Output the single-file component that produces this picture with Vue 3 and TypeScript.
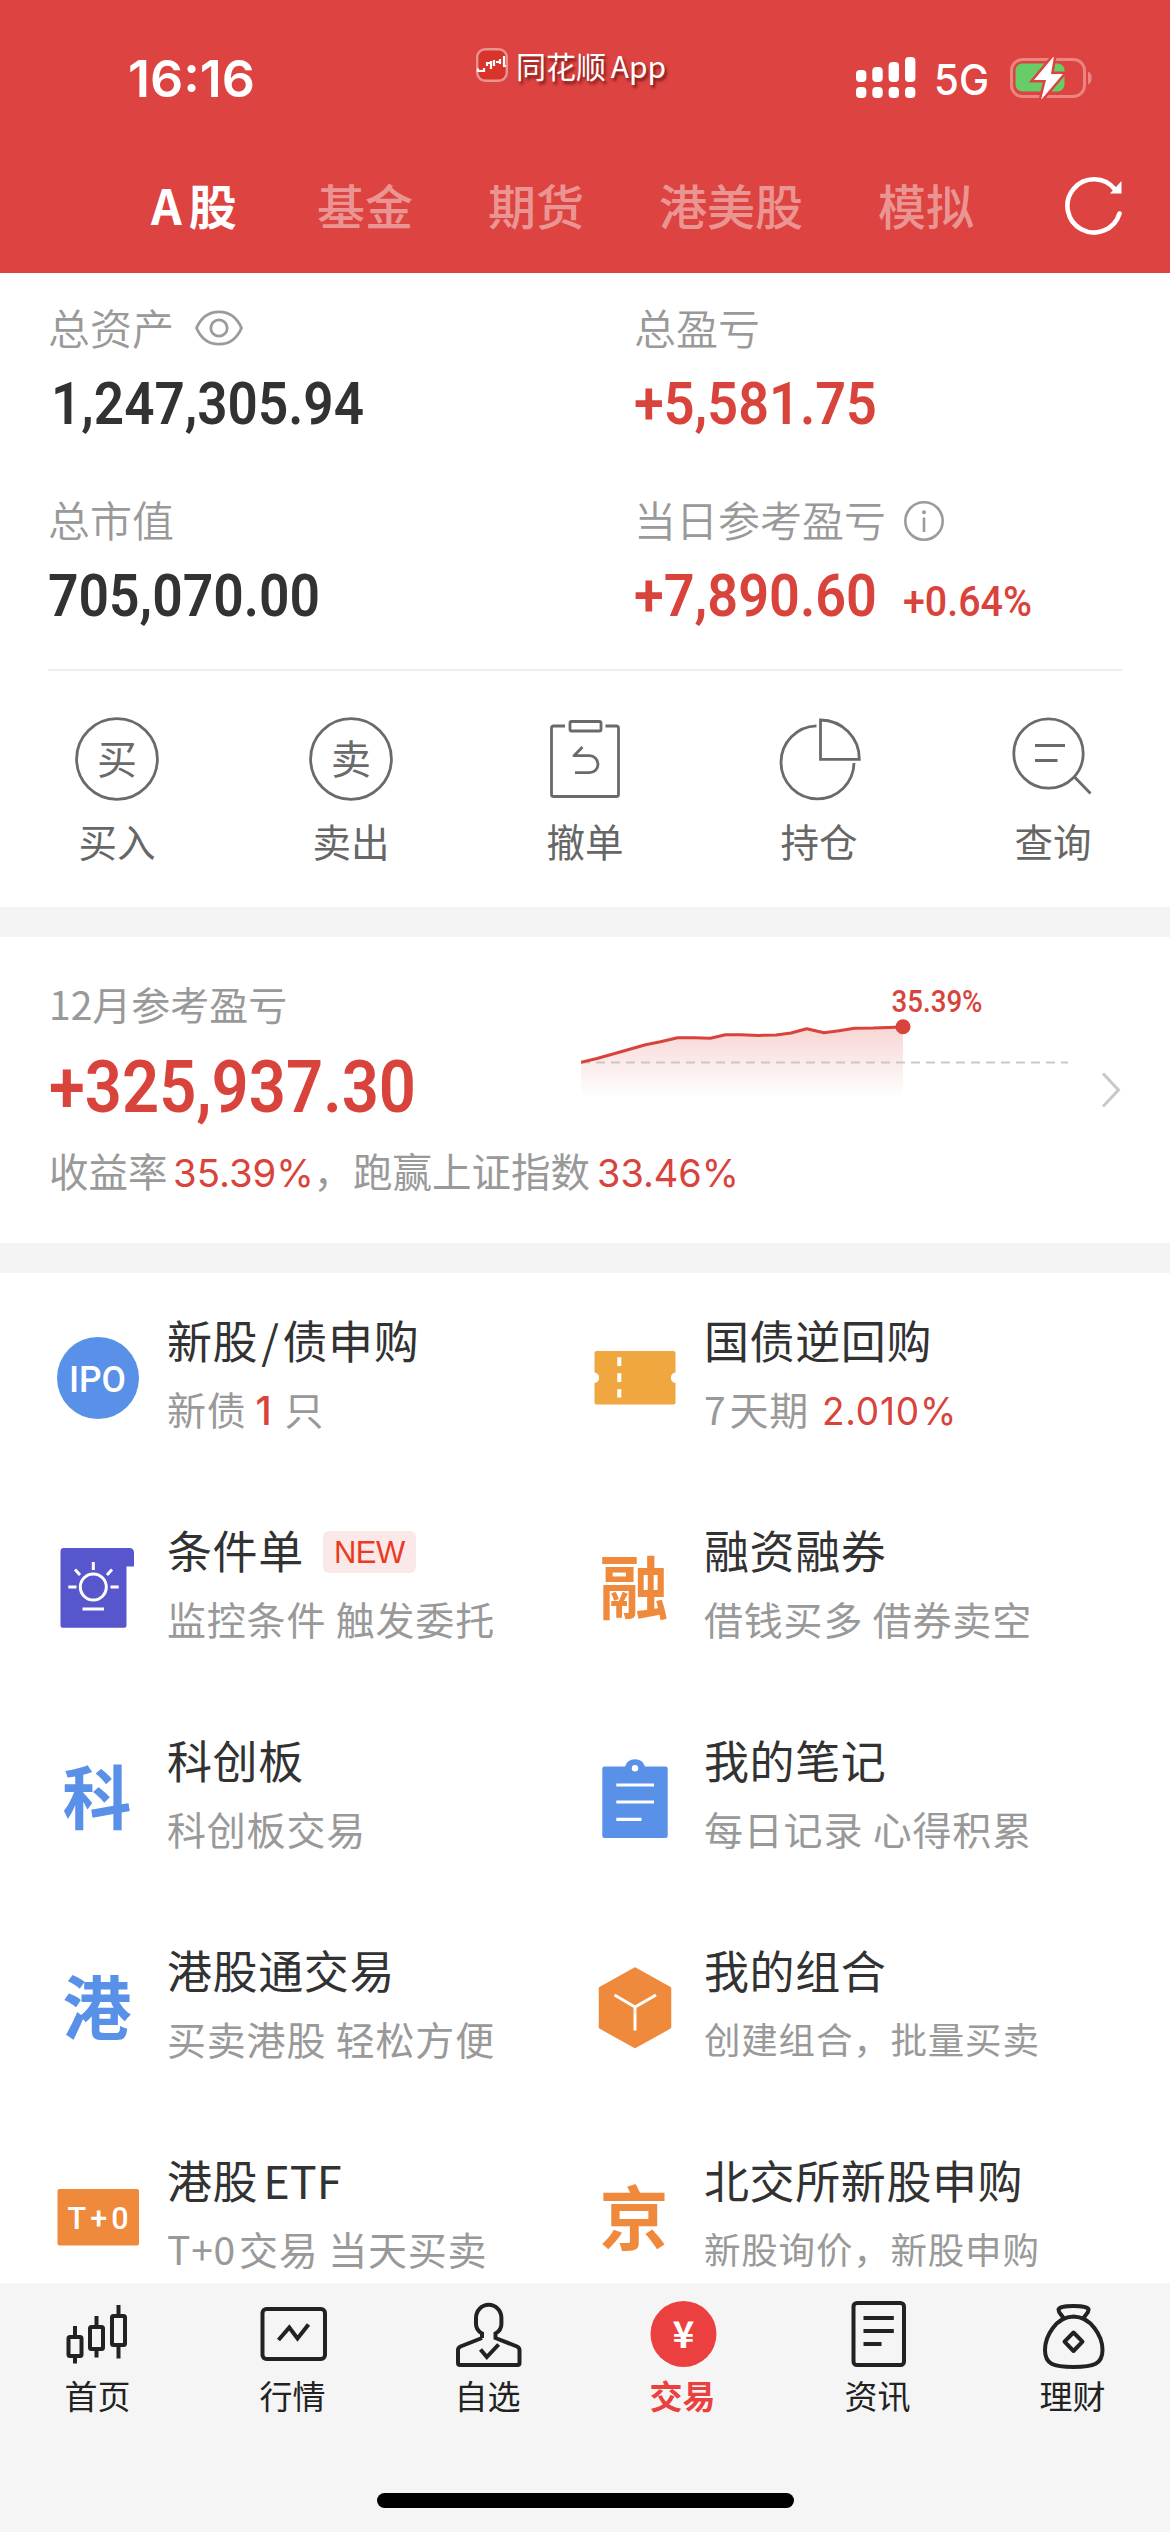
<script setup lang="ts">
import { h, type FunctionalComponent } from 'vue'

interface FigureProps {
  text: string
  width: number
  cap: number
  weight?: number
  family?: string
}

// A condensed figure: its box is as high as a capital letter, its baseline is the bottom edge.
const Figure: FunctionalComponent<FigureProps> = (p) =>
  h('svg', { width: p.width, height: p.cap, style: 'overflow: visible; flex: none' }, [
    h(
      'text',
      {
        x: 0,
        y: p.cap,
        fill: 'currentColor',
        'font-family': p.family ?? 'Roboto, sans-serif',
        'font-size': p.cap / (p.family ? 0.727 : 0.711),
        'font-weight': p.weight ?? 600,
        textLength: p.width,
        lengthAdjust: 'spacingAndGlyphs',
      },
      p.text,
    ),
  ])
Figure.props = ['text', 'width', 'cap', 'weight', 'family']

const markets = [
  { name: 'A 股', cls: 'm0' },
  { name: '基金', cls: 'm1' },
  { name: '期货', cls: 'm2' },
  { name: '港美股', cls: 'm3' },
  { name: '模拟', cls: 'm4' },
]

const actions = [
  { id: 'buy', label: '买入' },
  { id: 'sell', label: '卖出' },
  { id: 'cancel', label: '撤单' },
  { id: 'hold', label: '持仓' },
  { id: 'query', label: '查询' },
]

interface Service {
  icon: string
  title: string
  sub?: string
  small?: boolean
  badge?: string
}

const services: Service[] = [
  { icon: 'ipo', title: '新股/债申购' },
  { icon: 'ticket', title: '国债逆回购' },
  { icon: 'cond', title: '条件单', sub: '监控条件 触发委托', badge: 'NEW' },
  { icon: '融', title: '融资融券', sub: '借钱买多 借券卖空' },
  { icon: '科', title: '科创板', sub: '科创板交易' },
  { icon: 'note', title: '我的笔记', sub: '每日记录 心得积累' },
  { icon: '港', title: '港股通交易', sub: '买卖港股 轻松方便' },
  { icon: 'cube', title: '我的组合', sub: '创建组合，批量买卖', small: true },
  { icon: 't0', title: '港股 ETF' },
  { icon: '京', title: '北交所新股申购', sub: '新股询价，新股申购', small: true },
]

const tabs = ['首页', '行情', '自选', '交易', '资讯', '理财']

const trend: [number, number][] = [
  [0, 84.3], [16, 80.5], [49.6, 71], [64.5, 66.7], [79.4, 63.7], [96.6, 59.7], [113, 59.7],
  [129.4, 60.2], [144.4, 56.7], [160, 56.7], [178, 57.4], [195, 57], [210, 55], [225.7, 50.7],
  [243, 54.7], [258, 52.7], [273.5, 50.2], [292, 50], [322, 49],
]
const linePoints = trend.map((p) => p.join(',')).join(' ')
const areaPoints = `0,120 ${linePoints} 322,120`
</script>

<template>
  <div class="screen">
    <header class="top">
      <div class="status">
        <Figure class="clock" text="16:16" :width="127" :cap="37" :weight="600" family="Inter, sans-serif" />
        <div class="mark">
          <svg width="32" height="34" viewBox="0 0 32 34">
            <rect x="1.2" y="1.2" width="29.6" height="31.6" rx="8" fill="#d8342c" stroke="#e99391" stroke-width="2.4" />
            <path d="M2 20.5V23H8V20M11 14v4M11 15h3M15 13v8M18 12v6M20 14h3M24 11v5M28 8v10H30" fill="none" stroke="#fff" stroke-width="2.2" />
          </svg>
          <span>同花顺 App</span>
        </div>
        <svg class="signal" width="60" height="42" viewBox="0 0 60 42" fill="#fff">
          <rect x="0" y="13" width="10.4" height="12" rx="4" /><rect x="16.3" y="10" width="10.4" height="15" rx="4" />
          <rect x="32.6" y="5" width="10.4" height="20" rx="4" /><rect x="49" y="0" width="10.4" height="25" rx="4" />
          <rect x="0" y="30" width="10.4" height="11" rx="4" /><rect x="16.3" y="30" width="10.4" height="11" rx="4" />
          <rect x="32.6" y="30" width="10.4" height="11" rx="4" /><rect x="49" y="30" width="10.4" height="11" rx="4" />
        </svg>
        <Figure class="net" text="5G" :width="55" :cap="31" :weight="500" family="Inter, sans-serif" />
        <svg class="battery" width="84" height="42" viewBox="0 0 84 42">
          <rect x="1.5" y="2.5" width="73" height="37" rx="11" fill="none" stroke="#e98583" stroke-width="3" />
          <path d="M78 14.5c5 2 5 11 0 13z" fill="#e98583" />
          <rect x="5.5" y="6.500" width="49" height="28" rx="7" fill="#67ce67" />
          <path d="M44 -1L24 23H36L31 43L53 17H41Z" fill="#fff" stroke="#dd4340" stroke-width="5" paint-order="stroke" />
        </svg>
      </div>
      <nav class="markets">
        <span v-for="(m, i) in markets" :key="m.name" :class="[m.cls, { on: i === 0 }]">{{ m.name }}</span>
        <svg class="refresh" width="60" height="62" viewBox="0 0 60 62" fill="none" stroke="#fff" stroke-width="4.6">
          <path d="M54.5 38.5A26.6 26.6 0 1 1 50 14.5" stroke-linecap="round" />
          <path d="M56.500 6V18.5H45Z" fill="#fff" stroke="none" />
        </svg>
      </nav>
    </header>

    <section class="summary">
      <div class="cell">
        <div class="label">总资产
          <svg class="eye" width="48" height="36" viewBox="0 0 48 36" fill="none" stroke="#9b9b9b" stroke-width="2.8">
            <path d="M1.5 18C6 7.500 14 1.800 24 1.800S42 7.500 46.5 18C42 28.500 34 34.2 24 34.2S6 28.500 1.5 18Z" stroke-linejoin="round" />
            <circle cx="24" cy="18" r="8.2" />
          </svg>
        </div>
        <Figure class="first" text="1,247,305.94" :width="313" :cap="42" />
      </div>
      <div class="cell">
        <div class="label">总盈亏</div>
        <Figure class="red" text="+5,581.75" :width="243" :cap="42" />
      </div>
      <div class="cell">
        <div class="label">总市值</div>
        <Figure text="705,070.00" :width="272" :cap="42" />
      </div>
      <div class="cell">
        <div class="label">当日参考盈亏
          <svg class="info" width="42" height="42" viewBox="0 0 42 42" fill="none" stroke="#9b9b9b" stroke-width="2.6">
            <circle cx="21" cy="21" r="18.7" /><path d="M21 17.5V32" /><circle cx="21" cy="12.3" r="2" fill="#9b9b9b" stroke="none" />
          </svg>
        </div>
        <div class="pair red">
          <Figure text="+7,890.60" :width="243" :cap="42" />
          <Figure text="+0.64%" :width="129" :cap="30" :weight="500" />
        </div>
      </div>
    </section>

    <section class="actions">
      <div v-for="a in actions" :key="a.id" class="action">
        <svg width="84" height="84" viewBox="0 0 84 84" fill="none" stroke="#6a6a6a" stroke-width="2.8">
          <template v-if="a.id === 'buy' || a.id === 'sell'">
            <circle cx="42" cy="42" r="40.4" />
            <text x="42" y="56.5" class="glyph">{{ a.label[0] }}</text>
          </template>
          <template v-else-if="a.id === 'cancel'">
            <path d="M22 9H10.500Q8.500 9 8.500 11V77.500Q8.500 79.500 10.500 79.500H73.500Q75.500 79.500 75.500 77.500V11Q75.500 9 73.500 9H62.500" />
            <rect x="27" y="4.500" width="31" height="9.500" rx="1.500" />
            <path d="M39.500 30L31 38.700H46.500A8.500 8.500 0 0 1 46.500 55.700H32" stroke-linejoin="round" />
          </template>
          <template v-else-if="a.id === 'hold'">
            <path d="M39.500 8.800A36.500 36.500 0 1 0 77 46" />
            <path d="M43.500 3V42.300H82.300A39 39 0 0 0 43.500 3Z" />
          </template>
          <template v-else>
            <circle cx="37.500" cy="36.500" r="34.700" />
            <path d="M63.500 60L79.500 76.500M24 28.500H54M24 43.500H46.500" />
          </template>
        </svg>
        <span>{{ a.label }}</span>
      </div>
    </section>

    <section class="profit">
      <div class="main">
        <div class="row">
          <div class="figures">
            <div class="month">12月参考盈亏</div>
            <Figure class="red" text="+325,937.30" :width="367" :cap="51" />
          </div>
          <svg width="490" height="134" viewBox="0 0 490 134">
            <defs>
              <linearGradient id="fade" x1="0" y1="0" x2="0" y2="1">
                <stop offset="0" stop-color="#d8433b" stop-opacity=".22" />
                <stop offset="1" stop-color="#d8433b" stop-opacity="0" />
              </linearGradient>
            </defs>
            <polygon :points="areaPoints" fill="url(#fade)" />
            <path d="M0 84.500H487" stroke="#c9c9c9" stroke-width="2" stroke-dasharray="9 6" />
            <polyline :points="linePoints" fill="none" stroke="#d8433b" stroke-width="3" stroke-linejoin="round" />
            <circle cx="322" cy="48.700" r="7.500" fill="#d8433b" />
            <text x="310.500" y="34" class="peak" textLength="91" lengthAdjust="spacingAndGlyphs">35.39%</text>
          </svg>
        </div>
        <div class="rate">
          <span>收益率</span><Figure class="red r1" text="35.39%" :width="141" :cap="28" :weight="400" family="Inter, sans-serif" />
          <span>，跑赢上证指数</span><Figure class="red r2" text="33.46%" :width="142" :cap="28" :weight="400" family="Inter, sans-serif" />
        </div>
      </div>
      <svg width="20" height="38" viewBox="0 0 20 38"><path d="M2 2.500L17.500 19L2 35.500" fill="none" stroke="#c8c8c8" stroke-width="3" /></svg>
    </section>

    <section class="services">
      <div v-for="s in services" :key="s.title" class="service">
        <svg width="82" height="82" viewBox="0 0 82 82" :class="['pic', s.icon]">
          <template v-if="s.icon === 'ipo'">
            <circle cx="41" cy="41" r="41" fill="#5990e8" />
            <text x="12" y="54.500" fill="#fff" font-family="Roboto, sans-serif" font-size="37" font-weight="500" textLength="57" lengthAdjust="spacingAndGlyphs">IPO</text>
          </template>
          <template v-else-if="s.icon === 'ticket'">
            <path d="M2.500 14H79.500Q81.500 14 81.500 16V35.500A5.300 5.300 0 0 0 81.500 46V65.500Q81.500 67.500 79.500 67.500H2.500Q.5 67.500 .5 65.500V46A5.300 5.300 0 0 0 .5 35.500V16Q.5 14 2.500 14Z" fill="#f1a740" />
            <path d="M25.300 20.300V29M25.300 36.300V45M25.300 52.300V60.500" stroke="#fff" stroke-width="4" />
          </template>
          <template v-else-if="s.icon === 'cond'">
            <path d="M6 1H73Q77 1.500 77 6V19.500H69.500V78.500Q69.500 80.700 67.500 80.700H5.500Q3.500 80.700 3.500 78.500V4Q3.500 1.500 6 1Z" fill="#5756cd" />
            <g fill="none" stroke="#fff" stroke-width="3">
              <circle cx="36.300" cy="40" r="13" />
              <path d="M36.300 15V23M11.300 40H19.500M53.500 40H61.700M18 22.500L23 28M55 22.500L50 28M25.500 62H47" />
            </g>
          </template>
          <template v-else-if="s.icon === 'note'">
            <path d="M10.500 9.500H31A10.500 10.500 0 0 1 51 9.500H71.500Q73.700 9.500 73.700 11.500V79Q73.700 81 71.500 81H10.500Q8.300 81 8.300 79V11.500Q8.300 9.500 10.500 9.500Z" fill="#5990e8" />
            <circle cx="41" cy="11.200" r="3.200" fill="#fff" />
            <path d="M22.300 28H60M22.300 45H60M22.300 62.300H47.500" stroke="#fff" stroke-width="3.200" />
          </template>
          <template v-else-if="s.icon === 'cube'">
            <path d="M41 1.500L76 21V60.500L41 80L6 60.500V21Z" fill="#ef893b" stroke="#ef893b" stroke-width="2.500" stroke-linejoin="round" />
            <path d="M20.500 28L41 40L62 28M41 40V63.500" fill="none" stroke="#fff" stroke-width="3" />
          </template>
          <template v-else-if="s.icon === 't0'">
            <rect x=".5" y="12" width="81.500" height="56.500" rx="2" fill="#ef893b" />
            <text x="10.500" y="51.500" fill="#fff" font-family="Roboto, sans-serif" font-size="30.500" font-weight="500" textLength="61">T+0</text>
          </template>
          <text v-else x="40" y="67" class="char">{{ s.icon }}</text>
        </svg>
        <div class="copy">
          <div class="title">
            <template v-if="s.icon === 'ipo'">新股<span class="slash">/</span>债申购</template>
            <template v-else-if="s.icon === 't0'">港股<span class="latin">ETF</span></template>
            <template v-else>{{ s.title }}</template>
            <span v-if="s.badge" class="badge">{{ s.badge }}</span>
          </div>
          <div :class="['sub', { small: s.small }]">
            <template v-if="s.icon === 'ipo'">新债<b class="one">1</b>只</template>
            <template v-else-if="s.icon === 'ticket'"><i>7</i>天期<Figure class="red yield" text="2.010%" :width="135" :cap="28" :weight="400" family="Inter, sans-serif" /></template>
            <template v-else-if="s.icon === 't0'"><i>T+0</i>交易 当天买卖</template>
            <template v-else>{{ s.sub }}</template>
          </div>
        </div>
      </div>
    </section>

    <footer class="tabbar">
      <div class="tabs">
        <div v-for="(t, i) in tabs" :key="t" :class="['tab', { on: i === 3 }]">
          <svg width="80" height="80" viewBox="0 0 80 80" fill="none" stroke="#222" stroke-width="4">
            <template v-if="i === 0">
              <g transform="translate(-1.500 0)">
                <rect x="12" y="44" width="13" height="19" rx="1.500" /><rect x="33.500" y="34" width="13" height="22" rx="1.500" /><rect x="55.500" y="23" width="13" height="29" rx="1.500" />
                <path d="M18.500 33V43M18.500 64V70.500M40 23V33M40 57V64.500M62 12V22M62 53V65.500" />
              </g>
            </template>
            <template v-else-if="i === 1">
              <rect x="9.500" y="16" width="62.500" height="50" rx="4" />
              <path d="M25.500 47L36.300 34.500L44.500 45.500L55.500 31.500" />
            </template>
            <template v-else-if="i === 2">
              <path d="M34 45V40.500C29.500 38 28 35 28 31V25A12.700 13.300 0 0 1 53.400 25V31C53.400 35 52 38 47.500 40.500V45L69 53.500Q71.500 54.800 71.500 57V70Q71.500 72 69.500 72H12Q10 72 10 70V57Q10 54.800 12.500 53.500L34 45" />
              <path d="M32.500 56.500L38.800 64L50.600 51.500" />
            </template>
            <template v-else-if="i === 3">
              <circle cx="40.500" cy="41" r="33" fill="#eb3f40" stroke="none" />
              <text x="40.500" y="55" class="yuan">¥</text>
            </template>
            <template v-else-if="i === 4">
              <rect x="15.500" y="10" width="50.500" height="62" rx="3.500" />
              <path d="M25.500 25H55.800M25.500 38H55.800M25.500 51H43.500" />
            </template>
            <template v-else>
              <path d="M31 26C29.500 22 25.500 20.500 25.500 16.500C26 11.700 55 11.700 55.600 16.500C55.600 20.500 51.500 22 50 26" />
              <path d="M40.500 23.600C23 24 12 43 12 57C12 71 20 74 40.500 74S69.500 71 69.500 57C69.500 43 58 24 40.500 23.600Z" />
              <path d="M40.500 39.500L49.500 48.700L40.500 58L31.500 48.700Z" stroke-linejoin="round" />
            </template>
          </svg>
          <span>{{ t }}</span>
        </div>
      </div>
      <div class="home"></div>
    </footer>
  </div>
</template>

<style>
body {
  margin: 0;
  background: #fff;
}
</style>

<style scoped>
.screen {
  display: flex;
  flex-direction: column;
  width: 1170px;
  height: 2532px;
  overflow: hidden;
  background: #fff;
  color: #323232;
  font-family: 'Noto Sans CJK SC', sans-serif;
  white-space: nowrap;
}
svg {
  display: block;
  flex: none;
}
.red {
  color: #d8433b;
}
.top {
  flex: none;
  height: 273px;
  background: #dd4340;
  color: #fff;
}
.status {
  display: flex;
  height: 143px;
}
.clock {
  margin: 60px 0 0 128px;
}
.mark {
  display: flex;
  width: 192px;
  margin: 48px 0 0 221px;
  font-size: 30px;
  line-height: 34px;
}
.mark span {
  margin: 0 0 0 8px;
  word-spacing: -2px;
  text-shadow: 2px 3px 3px rgba(70, 0, 0, 0.65);
}
.signal {
  margin: 57px 0 0 188px;
}
.net {
  margin: 64px 0 0 18px;
}
.battery {
  margin: 57px 0 0 21px;
}
.markets {
  display: flex;
  align-items: center;
  height: 130px;
  padding-left: 151px;
  color: rgba(255, 255, 255, 0.46);
  font-size: 48px;
  font-weight: 500;
  line-height: 60px;
}
.markets span {
  margin-top: -8px;
}
.markets .on {
  color: #fff;
  font-weight: 700;
  word-spacing: -4px;
}
.m0 { width: 166px; }
.m1 { width: 171px; }
.m2 { width: 171px; }
.m3 { width: 219px; }
.m4 { width: 187px; }
.refresh {
  margin-top: -5px;
}
.summary {
  display: grid;
  flex: none;
  grid-template-columns: 586px 1fr;
  grid-template-rows: 192px 1fr;
  box-sizing: border-box;
  height: 398px;
  margin: 0 48px;
  padding-top: 29px;
  border-bottom: 2px solid #eee;
}
.label {
  display: flex;
  align-items: center;
  height: 50px;
  margin-bottom: 30px;
  color: #999;
  font-size: 42px;
  font-weight: 350;
  line-height: 50px;
}
.eye {
  margin: 2px 0 0 21px;
}
.info {
  margin: 4px 0 0 17px;
}
.first {
  margin-left: 3px;
}
.pair {
  display: flex;
  align-items: flex-end;
  gap: 26px;
}
.actions {
  display: flex;
  flex: none;
  justify-content: space-between;
  height: 190px;
  padding: 46px 75px 0;
}
.action {
  display: flex;
  flex-direction: column;
  align-items: center;
  width: 84px;
  color: #666;
  font-size: 38.500px;
  line-height: 50px;
}
.action span {
  margin-top: 14px;
}
.glyph {
  fill: #6a6a6a;
  stroke: none;
  font-size: 40px;
  text-anchor: middle;
}
.profit {
  display: flex;
  flex: none;
  align-items: center;
  height: 306px;
  border: solid #f4f4f4;
  border-width: 30px 0;
}
.main {
  width: 1052px;
  height: 224px;
  padding-left: 49px;
}
.row {
  display: flex;
}
.figures {
  width: 532px;
}
.month {
  height: 50px;
  margin-bottom: 33px;
  color: #999;
  font-size: 39px;
  line-height: 50px;
}
.peak {
  fill: #d8433b;
  font-family: Roboto, sans-serif;
  font-size: 31px;
  font-weight: 500;
}
.rate {
  display: flex;
  align-items: baseline;
  margin-top: 33px;
  color: #999;
  font-size: 39.500px;
  line-height: 50px;
}
.r1 {
  margin-left: 5px;
}
.r2 {
  margin-left: 7px;
}
.services {
  display: grid;
  flex: none;
  grid-template-columns: 537px 1fr;
  grid-auto-rows: 210px;
  height: 1010px;
  padding-left: 57px;
  overflow: hidden;
}
.service {
  display: flex;
}
.pic {
  margin-top: 64px;
  overflow: visible;
}
.char {
  font-size: 69px;
  font-weight: 700;
  text-anchor: middle;
  fill: #5990e8;
}
.融 .char,
.京 .char {
  fill: #ef893b;
}
.copy {
  margin: 37px 0 0 28px;
}
.title {
  display: flex;
  align-items: center;
  height: 60px;
  font-size: 45px;
  letter-spacing: 0.6px;
  line-height: 60px;
}
.slash {
  padding: 0 3px;
}
.latin {
  margin-left: 5px;
  letter-spacing: 0;
}
.badge {
  width: 93px;
  height: 42px;
  margin: 4px 0 0 19px;
  border-radius: 6px;
  background: #fbe8e8;
  color: #ea3a23;
  font-family: 'Liberation Sans', sans-serif;
  font-size: 31px;
  letter-spacing: -0.5px;
  line-height: 43px;
  text-align: center;
}
.sub {
  display: flex;
  align-items: baseline;
  height: 50px;
  margin-top: 13px;
  color: #999;
  font-size: 39px;
  letter-spacing: 0.8px;
  line-height: 50px;
  white-space: pre;
}
.sub.small {
  margin-top: 14px;
  font-size: 36.500px;
}
.sub i {
  margin-right: 3px;
  font-style: normal;
}
.one {
  margin: 0 12px 0 9px;
  color: #d8433b;
  font-family: Inter, sans-serif;
  font-weight: 500;
}
.yield {
  margin-left: 13px;
}
.tabbar {
  display: flex;
  flex: 1;
  flex-direction: column;
  align-items: center;
  justify-content: space-between;
  padding-bottom: 24px;
  background: #f5f5f5;
}
.tabs {
  display: flex;
}
.tab {
  display: flex;
  flex-direction: column;
  align-items: center;
  width: 195px;
  padding-top: 10px;
  color: #222;
  font-size: 33px;
  line-height: 40px;
}
.tab span {
  margin-top: 2px;
}
.tab.on {
  color: #eb3f40;
  font-weight: 700;
}
.yuan {
  fill: #fff;
  stroke: none;
  font-family: 'Noto Sans CJK SC', sans-serif;
  font-size: 37px;
  font-weight: 700;
  text-anchor: middle;
}
.home {
  width: 417px;
  height: 15px;
  border-radius: 8px;
  background: #000;
}
</style>
